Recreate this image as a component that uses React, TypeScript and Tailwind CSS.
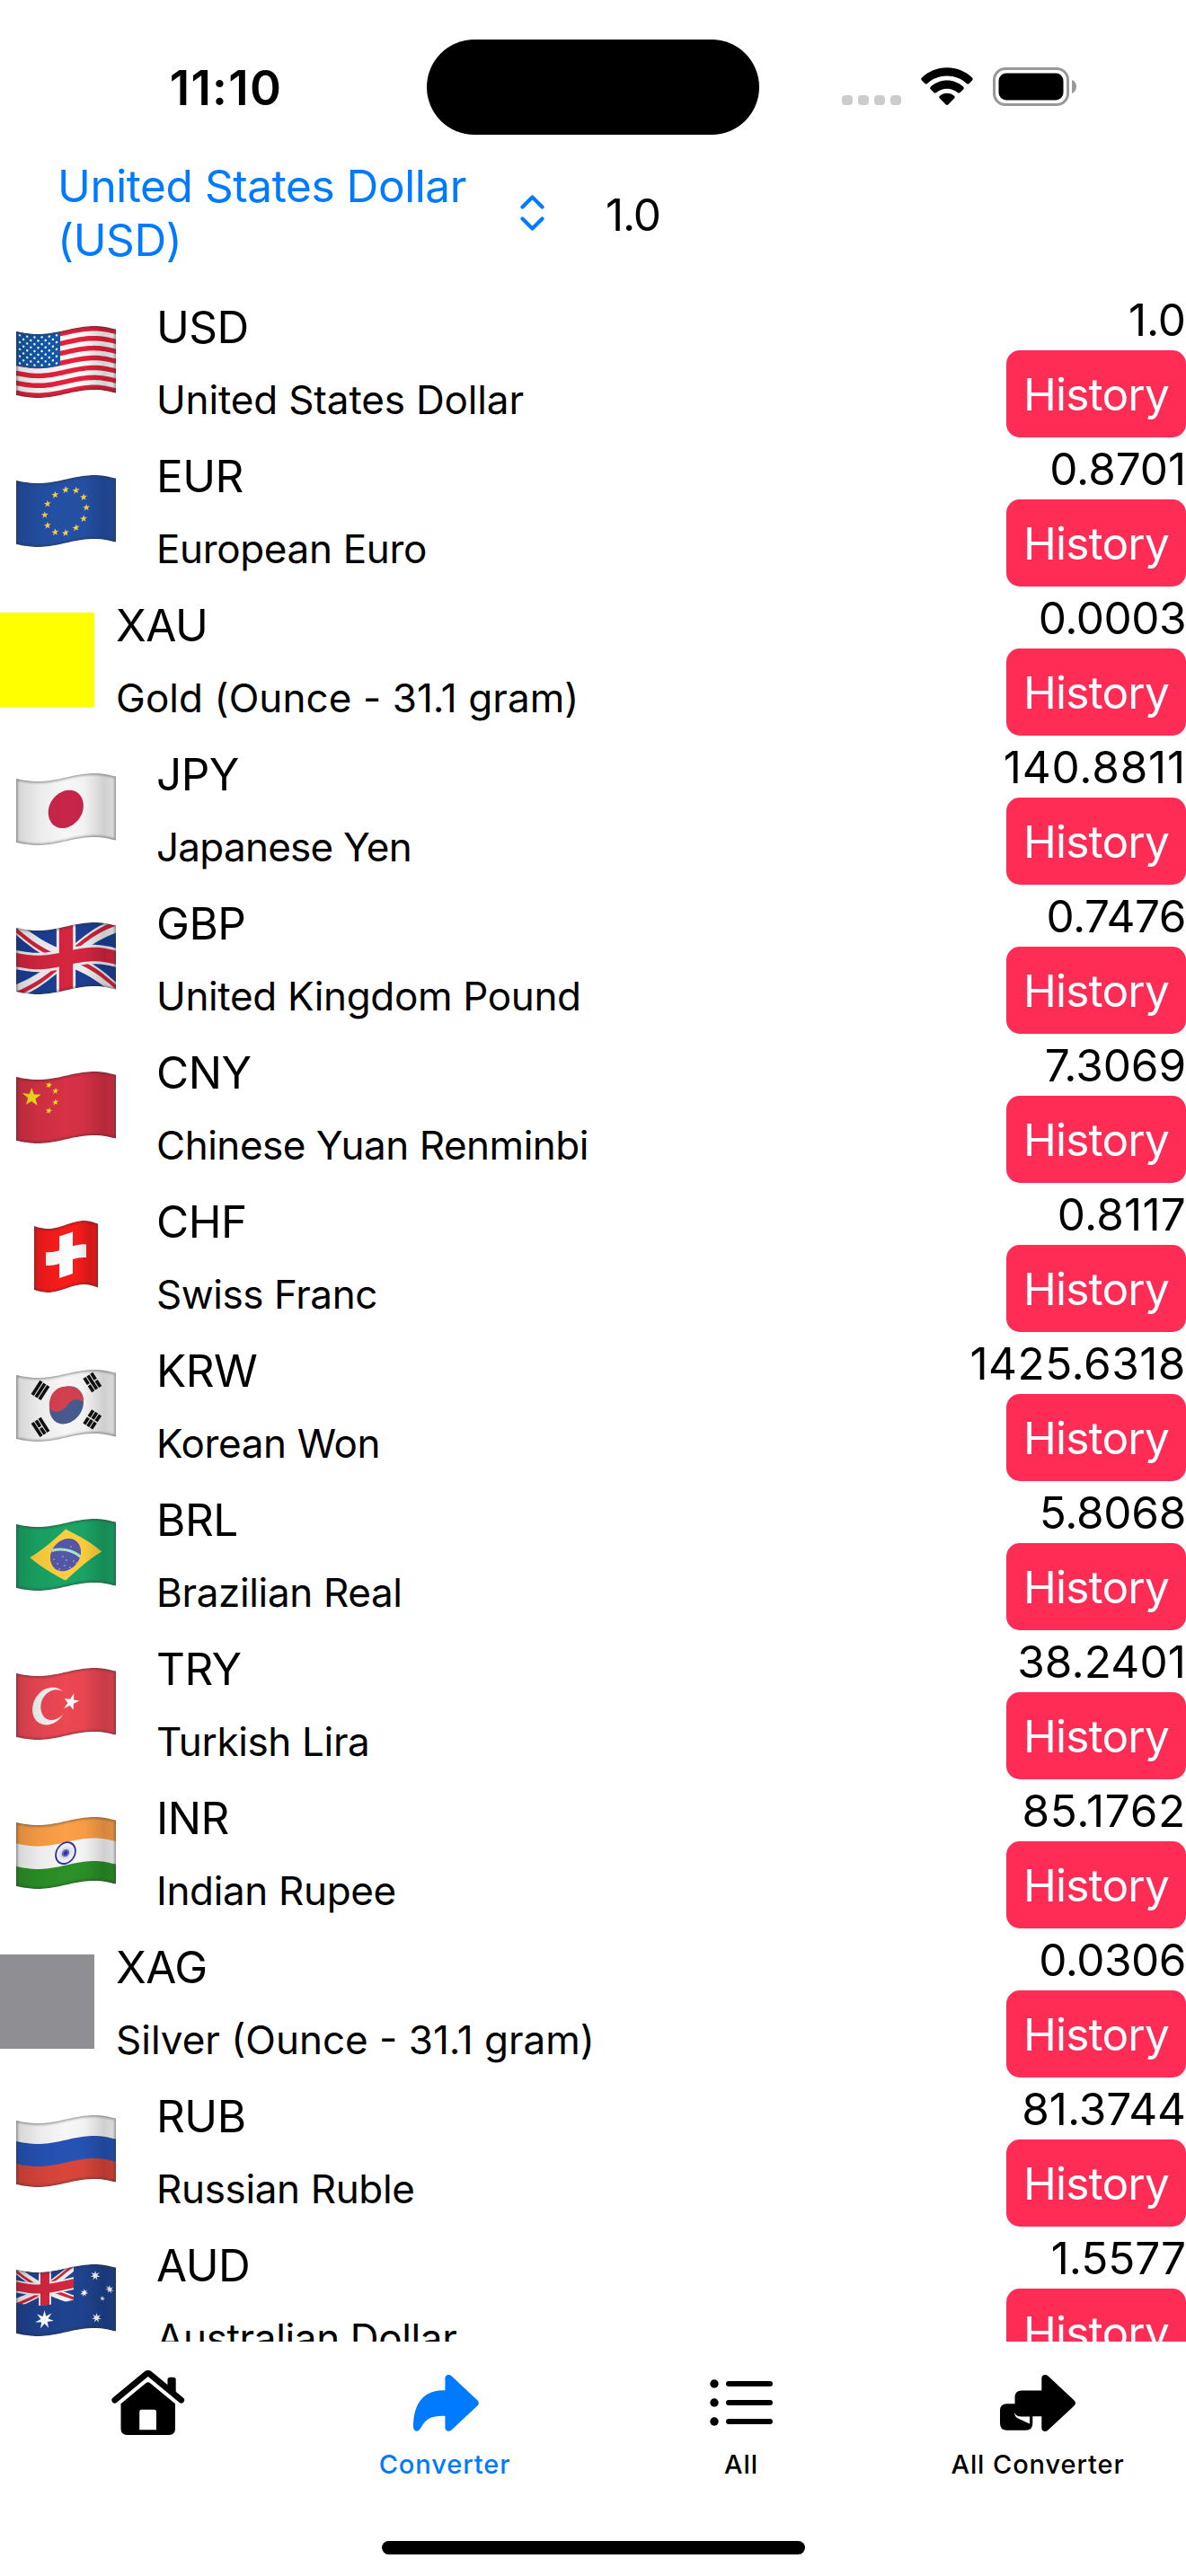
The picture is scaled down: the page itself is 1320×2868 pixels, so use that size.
import React from "react"

type Point = [number, number]

type Currency = {
  code: string
  name: string
  rate: string
  swatch?: string
  nameTracking?: string
  rateTracking?: string
}

const currencies: Currency[] = [
  { code: "USD", name: "United States Dollar", rate: "1.0", nameTracking: "tracking-[-0.15px]" },
  { code: "EUR", name: "European Euro", rate: "0.8701" },
  {
    code: "XAU",
    name: "Gold (Ounce - 31.1 gram)",
    rate: "0.0003",
    swatch: "bg-[#ffff00]",
    nameTracking: "tracking-[0.07px]",
    rateTracking: "tracking-[-0.5px]",
  },
  { code: "JPY", name: "Japanese Yen", rate: "140.8811", nameTracking: "tracking-[-0.75px]", rateTracking: "tracking-[0.8px]" },
  { code: "GBP", name: "United Kingdom Pound", rate: "0.7476", rateTracking: "tracking-[-0.5px]" },
  { code: "CNY", name: "Chinese Yuan Renminbi", rate: "7.3069", nameTracking: "tracking-[-0.48px]" },
  { code: "CHF", name: "Swiss Franc", rate: "0.8117", nameTracking: "tracking-[-0.45px]", rateTracking: "tracking-[0.2px]" },
  { code: "KRW", name: "Korean Won", rate: "1425.6318", rateTracking: "tracking-[0.5px]" },
  { code: "BRL", name: "Brazilian Real", rate: "5.8068", rateTracking: "tracking-[-0.3px]" },
  { code: "TRY", name: "Turkish Lira", rate: "38.2401", rateTracking: "tracking-[0.1px]" },
  { code: "INR", name: "Indian Rupee", rate: "85.1762", rateTracking: "tracking-[0.7px]" },
  {
    code: "XAG",
    name: "Silver (Ounce - 31.1 gram)",
    rate: "0.0306",
    swatch: "bg-[#8e8e93]",
    nameTracking: "tracking-[0px]",
    rateTracking: "tracking-[-0.5px]",
  },
  { code: "RUB", name: "Russian Ruble", rate: "81.3744" },
  { code: "AUD", name: "Australian Dollar", rate: "1.5577" },
]

const FLAG_W = 111
const FLAG_H = 71

const ease = (t: number) => (1 - Math.cos(Math.PI * t)) / 2

// vertical offset of the cloth at x
const wave = (x: number, width: number) => {
  const u = (x / width) * FLAG_W
  if (u < 24) return 6 + 3 * Math.sin((Math.PI / 2) * (u / 24))
  if (u < 87) return 9 - 9 * ease((u - 24) / 63)
  return 3.6 * (1 - Math.cos((Math.PI / 2) * ((u - 87) / 24)))
}

// splits every edge so that straight shapes bend with the cloth
const warp = (points: Point[], width = FLAG_W) => {
  const out: string[] = []
  points.forEach(([x0, y0], i) => {
    const [x1, y1] = points[(i + 1) % points.length]
    const steps = Math.max(1, Math.ceil(Math.abs(x1 - x0) / 3))
    for (let s = 0; s < steps; s++) {
      const x = x0 + ((x1 - x0) * s) / steps
      const y = y0 + ((y1 - y0) * s) / steps
      out.push(`${x.toFixed(2)},${(y + wave(x, width)).toFixed(2)}`)
    }
  })
  return out.join(" ")
}

const rect = (x: number, y: number, w: number, h: number): Point[] => [
  [x, y],
  [x + w, y],
  [x + w, y + h],
  [x, y + h],
]

const circle = (cx: number, cy: number, rx: number, ry = rx): Point[] =>
  Array.from({ length: 48 }, (_, i) => {
    const a = (i / 48) * Math.PI * 2
    return [cx + rx * Math.cos(a), cy + ry * Math.sin(a)]
  })

const star = (cx: number, cy: number, r: number, tips = 5, inner = 0.4, turn = 0): Point[] =>
  Array.from({ length: tips * 2 }, (_, i) => {
    const a = (i / (tips * 2)) * Math.PI * 2 - Math.PI / 2 + turn
    const k = i % 2 ? r * inner : r
    return [cx + k * Math.cos(a), cy + k * Math.sin(a)]
  })

const Shape = ({ points, fill, width }: { points: Point[]; fill: string; width?: number }) => (
  <polygon points={warp(points, width)} fill={fill} />
)

const UnionJack = ({ w, h, blue, cross }: { w: number; h: number; blue: string; cross: number }) => {
  const cx = w / 2
  const cy = h / 2
  const d = cross * 0.52
  const t = cross * 0.34
  const rim = cross * 0.19
  return (
    <g>
      <Shape points={rect(0, 0, w, h)} fill={blue} />
      <Shape points={[[0, -d], [w, h - d], [w, h + d], [0, d]]} fill="#f0f0f2" />
      <Shape points={[[0, h - d], [w, -d], [w, d], [0, h + d]]} fill="#f0f0f2" />
      <Shape points={[[0, 0], [cx, cy], [cx, cy + t], [0, t]]} fill="#d2233c" />
      <Shape points={[[0, h], [cx, cy], [cx, cy + t], [0, h + t]]} fill="#d2233c" />
      <Shape points={[[w, 0], [cx, cy], [cx, cy - t], [w, -t]]} fill="#d2233c" />
      <Shape points={[[w, h], [cx, cy], [cx, cy - t], [w, h - t]]} fill="#d2233c" />
      <Shape points={rect(cx - cross / 2 - rim, 0, cross + rim * 2, h)} fill="#f0f0f2" />
      <Shape points={rect(0, cy - cross / 2 - rim, w, cross + rim * 2)} fill="#f0f0f2" />
      <Shape points={rect(cx - cross / 2, 0, cross, h)} fill="#d4263f" />
      <Shape points={rect(0, cy - cross / 2, w, cross)} fill="#d4263f" />
    </g>
  )
}

const Trigram = ({ x, y, angle, broken }: { x: number; y: number; angle: number; broken: boolean[] }) => (
  <g transform={`translate(${x} ${y}) rotate(${angle})`} fill="#111">
    {broken.map((split, i) => {
      const top = -6.6 + i * 4.7
      return split ? (
        <React.Fragment key={i}>
          <rect x={-9} y={top} width={8.3} height={3.7} />
          <rect x={0.8} y={top} width={8.3} height={3.7} />
        </React.Fragment>
      ) : (
        <rect key={i} x={-9} y={top} width={18} height={3.7} />
      )
    })}
  </g>
)

const flagArt: Record<string, React.ReactNode> = {
  USD: (
    <g>
      <Shape points={rect(0, 0, 111, 71)} fill="#fafafa" />
      {[0, 2, 4, 6, 8, 10, 12].map((i) => (
        <Shape key={i} points={rect(0, (i * 71) / 13, 111, 71 / 13)} fill="#e4213b" />
      ))}
      <Shape points={rect(0, 0, 49, 38)} fill="#1259a8" />
      {Array.from({ length: 9 }, (_, row) =>
        Array.from({ length: row % 2 ? 5 : 6 }, (_, col) => (
          <Shape
            key={`${row}-${col}`}
            points={circle(4 + (row % 2 ? 4.1 : 0) + col * 8.2, 3.5 + row * 3.9, 1.25)}
            fill="#fff"
          />
        ))
      )}
    </g>
  ),
  EUR: (
    <g>
      <Shape points={rect(0, 0, 111, 71)} fill="#2450a5" />
      {Array.from({ length: 12 }, (_, i) => {
        const a = (i / 12) * Math.PI * 2
        return (
          <Shape
            key={i}
            points={star(55 + 23.2 * Math.sin(a), 35.7 - 24 * Math.cos(a), 4.2)}
            fill="#fbd043"
          />
        )
      })}
    </g>
  ),
  JPY: (
    <g>
      <Shape points={rect(0, 0, 111, 71)} fill="#f7f7f7" />
      <Shape points={circle(55.3, 35.3, 19.6, 20.8)} fill="#c8254a" />
    </g>
  ),
  GBP: <UnionJack w={111} h={71} blue="#1c3f94" cross={15.4} />,
  CNY: (
    <g>
      <Shape points={rect(0, 0, 111, 71)} fill="#d63145" />
      <Shape points={star(17.3, 20, 10.8)} fill="#f6e01c" />
      <Shape points={star(36.3, 7, 3.8, 5, 0.4, 0.3)} fill="#f6e01c" />
      <Shape points={star(43.7, 14.8, 3.8, 5, 0.4, 0.15)} fill="#f6e01c" />
      <Shape points={star(43.7, 27.2, 3.8)} fill="#f6e01c" />
      <Shape points={star(36.3, 35.5, 3.8, 5, 0.4, 0.3)} fill="#f6e01c" />
    </g>
  ),
  CHF: (
    <g>
      <Shape width={71} points={rect(0, 0, 71, 71)} fill="#fa1c1c" />
      <Shape width={71} points={rect(13, 26.3, 45, 14.7)} fill="#fff" />
      <Shape width={71} points={rect(28, 10.5, 15, 46.5)} fill="#fff" />
    </g>
  ),
  KRW: (
    <g>
      <Shape points={rect(0, 0, 111, 71)} fill="#f6f6f6" />
      <Shape points={circle(56, 35, 19, 20.6)} fill="#475a8d" />
      <path d="M37.4 44 C35 30 43 18.4 56 18.4 C69 17.6 76 27 75 37 C71 31.5 61.5 32 57 39.5 C52 47 42 49 37.4 44Z" fill="#d24050" />
      <Trigram x={27} y={23} angle={-57} broken={[false, false, false]} />
      <Trigram x={84.7} y={14} angle={57} broken={[true, false, true]} />
      <Trigram x={27} y={64} angle={57} broken={[false, true, false]} />
      <Trigram x={84.7} y={55.5} angle={-57} broken={[true, true, true]} />
    </g>
  ),
  BRL: (
    <g>
      <Shape points={rect(0, 0, 111, 71)} fill="#1ba566" />
      <Shape points={[[15.3, 34.5], [55, 7], [95.3, 36], [55, 64]]} fill="#fecf3e" />
      <Shape points={circle(55, 35.5, 17, 17.8)} fill="#5457a6" />
      <path d="M39.5 35.5 C50 32.5 62 34.5 71.5 42" fill="none" stroke="#a5e6c8" strokeWidth={3.2} />
      {[[42, 45], [46, 50], [52, 42], [56, 46], [54, 52], [60, 54], [64, 47], [48, 56], [61, 31], [67, 49]].map(([x, y]) => (
        <circle key={`${x}-${y}`} cx={x} cy={y} r={0.7} fill="#dcdcf5" />
      ))}
    </g>
  ),
  TRY: (
    <g>
      <Shape points={rect(0, 0, 111, 71)} fill="#ec4753" />
      <path d="M52.5 26.5 C46 19.5 33 20.5 26 28 C15 39 16 56 26 61.5 C35 66.5 47 61 52 52 C45 59 36 60 31 54.5 C25 47 26.5 35 34 28.5 C40 23.5 47 23 52.5 26.5Z" fill="#f3f3f3" />
      <Shape points={star(61, 34.8, 9.6, 5, 0.38, 0.35)} fill="#fbfbfb" />
    </g>
  ),
  INR: (
    <g>
      <Shape points={rect(0, 0, 111, 24)} fill="#fd9f48" />
      <Shape points={rect(0, 23.5, 111, 26)} fill="#f7f7f7" />
      <Shape points={rect(0, 49, 111, 22)} fill="#2b9127" />
      <Shape points={circle(55, 35.5, 11.8, 12.6)} fill="#2e2f9e" />
      <Shape points={circle(55, 35.5, 10, 10.8)} fill="#f1f1f8" />
      <Shape points={star(55, 35.5, 9, 24, 0.3)} fill="#a3a4d6" />
      <Shape points={circle(55, 35.5, 4)} fill="#5c5db8" />
      <Shape points={circle(55, 35.5, 2)} fill="#2e2f9e" />
    </g>
  ),
  RUB: (
    <g>
      <Shape points={rect(0, 0, 111, 24)} fill="#f7f7f7" />
      <Shape points={rect(0, 23, 111, 26)} fill="#2553b5" />
      <Shape points={rect(0, 48, 111, 23)} fill="#d9453b" />
    </g>
  ),
  AUD: (
    <g>
      <Shape points={rect(0, 0, 111, 71)} fill="#1f438f" />
      <UnionJack w={64} h={37} blue="#1f438f" cross={10} />
      <Shape points={rect(0, 37, 64, 12)} fill="#1f438f" />
      <Shape points={star(31.5, 53, 10.5, 7)} fill="#fff" />
      <Shape points={star(88, 12.5, 5.6, 7)} fill="#fff" />
      <Shape points={star(75.7, 31, 4.6, 7)} fill="#fff" />
      <Shape points={star(104, 25.7, 4.8, 7)} fill="#fff" />
      <Shape points={star(96, 37.5, 3)} fill="#fff" />
      <Shape points={star(89.5, 59.5, 5.6, 7)} fill="#fff" />
    </g>
  ),
}

const Flag = ({ code }: { code: string }) => {
  const width = code === "CHF" ? 71 : FLAG_W
  const outline = warp(rect(0, 0, width, FLAG_H), width)
  return (
    <svg width={width} height={80} viewBox={`0 0 ${width} 80`}>
      <defs>
        <clipPath id={`clip-${code}`}>
          <polygon points={outline} />
        </clipPath>
        <linearGradient id={`shade-${code}`}>
          <stop offset="0" stopColor="#000" stopOpacity={0.14} />
          <stop offset="0.22" stopColor="#000" stopOpacity={0.05} />
          <stop offset="0.5" stopColor="#000" stopOpacity={0} />
          <stop offset="0.68" stopColor="#000" stopOpacity={0.02} />
          <stop offset="0.88" stopColor="#000" stopOpacity={0.16} />
          <stop offset="1" stopColor="#000" stopOpacity={0.1} />
        </linearGradient>
        <filter id={`soft-${code}`} x="-10%" y="-10%" width="120%" height="120%">
          <feGaussianBlur stdDeviation="1.3" />
        </filter>
      </defs>
      <g clipPath={`url(#clip-${code})`}>
        {flagArt[code]}
        <rect width={width} height={80} fill={`url(#shade-${code})`} />
        <polygon
          points={outline}
          fill="none"
          stroke="#333"
          strokeOpacity={0.42}
          strokeWidth={3.4}
          filter={`url(#soft-${code})`}
        />
      </g>
    </svg>
  )
}

const StatusBar = () => (
  <div className="flex h-[177px] shrink-0 items-start">
    <div className="flex w-[475px] justify-center pt-[67px] pl-[28px]">
      <p className="text-[53px] leading-[62px] font-semibold tracking-[1.3px]">11:10</p>
    </div>
    <div className="mt-[44px] h-[106px] w-[370px] rounded-full bg-black" />
    <div className="mt-[75px] ml-[92px] flex h-[43px] items-start">
      <div className="mt-[31px] flex gap-[6.6px]">
        {[0, 1, 2, 3].map((i) => (
          <div key={i} className="h-[11px] w-[11.5px] rounded-[4px] bg-[#cccccc]" />
        ))}
      </div>
      <svg className="ml-[22px]" width="58" height="43" viewBox="0 0 58 43">
        <path d="M29 0.3 C40 0.3 50 4.6 57 11.6 C57.9 12.5 57.9 13.6 57.1 14.4 L53.6 17.9 C52.8 18.7 51.8 18.7 50.9 17.9 C44.9 12.5 37.3 9.5 29 9.5 C20.7 9.5 13.1 12.5 7.1 17.9 C6.2 18.7 5.2 18.7 4.4 17.9 L0.9 14.4 C0.1 13.6 0.1 12.5 1 11.6 C8 4.6 18 0.3 29 0.3Z" />
        <path d="M29 14.6 C36 14.6 42.3 17.3 47.1 21.6 C48 22.5 48 23.6 47.2 24.4 L43.5 28 C42.7 28.8 41.7 28.8 40.8 28 C37.6 25.3 33.5 23.7 29 23.7 C24.5 23.7 20.4 25.3 17.2 28 C16.3 28.8 15.3 28.8 14.5 28 L10.8 24.4 C10 23.6 10 22.5 10.9 21.6 C15.7 17.3 22 14.6 29 14.6Z" />
        <path d="M29 28.8 C32 28.8 34.9 29.9 37 31.8 C38 32.7 38 33.7 37.1 34.6 L30.5 41.2 C29.5 42.2 28.5 42.2 27.5 41.2 L20.9 34.6 C20 33.7 20 32.7 21 31.8 C23.1 29.9 26 28.8 29 28.8Z" />
      </svg>
      <svg className="ml-[22px]" width="94" height="43" viewBox="0 0 94 43">
        <rect x="1.5" y="1.5" width="82" height="40" rx="12.5" fill="none" stroke="#999" strokeWidth="3" />
        <rect x="6.5" y="6.5" width="72" height="30" rx="8.5" />
        <path d="M88 14 C91.5 15.4 93 18 93 21.5 C93 25 91.5 27.6 88 29Z" fill="#999" />
      </svg>
    </div>
  </div>
)

const AmountBar = () => (
  <div className="flex h-[144px] shrink-0 items-start">
    <div className="flex w-[674px] items-center pl-[64px]">
      <p className="w-[515px] text-[49.5px] leading-[60px] tracking-[-0.42px] text-[#007aff]">
        United States Dollar
        <br />
        (USD)
      </p>
      <svg width="27" height="40" viewBox="0 0 27 40" fill="none" stroke="#007aff" strokeWidth="4.2" strokeLinecap="round" strokeLinejoin="round">
        <path d="M2.5 13.5 L13.5 2.5 L24.5 13.5 M2.5 26.5 L13.5 37.5 L24.5 26.5" />
      </svg>
    </div>
    <p className="pt-[32px] text-[49.5px] leading-[60px] tracking-[-1.2px]">1.0</p>
  </div>
)

const CurrencyRow = ({ currency }: { currency: Currency }) => (
  <div className="flex h-[166px] shrink-0 items-start">
    {currency.swatch ? (
      <div className={`mt-[29px] mr-[24px] size-[105px] shrink-0 ${currency.swatch}`} />
    ) : (
      <div className="mt-[42px] mr-[28px] flex w-[146px] shrink-0 justify-center">
        <Flag code={currency.code} />
      </div>
    )}
    <div className="flex flex-1 flex-col gap-[24px] pt-[13px]">
      <p className="text-[49.5px] leading-[60px] tracking-[-0.5px]">{currency.code}</p>
      <p className={`text-[44px] leading-[54px] ${currency.nameTracking ?? "tracking-[-0.35px]"}`}>
        {currency.name}
      </p>
    </div>
    <div className="flex flex-col items-end gap-[4px] pt-[5px]">
      <p className={`text-[49.5px] leading-[60px] ${currency.rateTracking ?? "tracking-[-0.1px]"}`}>
        {currency.rate}
      </p>
      <button className="flex h-[97px] w-[200px] items-center justify-center rounded-[15px] bg-[#ff2d55] text-[49.5px] leading-[60px] tracking-[-0.8px] text-white">
        History
      </button>
    </div>
  </div>
)

const HomeIcon = () => (
  <svg width="82" height="73" viewBox="0 0 82 73">
    <path d="M3.8 33.2 L38.5 4.3 C40 3.1 41.5 3.1 43 4.3 L77.7 33.2" fill="none" stroke="#000" strokeWidth="6.8" strokeLinecap="round" strokeLinejoin="round" />
    <path d="M62.5 22 V10.5 Q62.5 7.8 65.2 7.8 H69 Q71.7 7.8 71.7 10.5 V29Z" />
    <path fillRule="evenodd" d="M10.5 37.2 L38.6 14 Q40.7 12.3 42.8 14 L71 37.2 V65 Q71 72 64 72 H17.5 Q10.5 72 10.5 65Z M33.5 43.8 Q31.2 43.8 31.2 46 V66.3 H50 V46 Q50 43.8 47.7 43.8Z" />
  </svg>
)

const ConverterIcon = () => (
  <svg className="ml-[3px]" width="73" height="63" viewBox="0 0 73 63" fill="currentColor">
    <path d="M35.4 17.3 V4 C35.4 1.5 37 0 39.3 0 C40.7 0 41.8 0.5 43 1.7 L71 28 C72.2 29.2 72.8 30.2 72.8 31.4 C72.8 32.5 72.2 33.6 71 34.8 L43 61 C41.9 62.1 40.8 62.7 39.4 62.7 C37 62.7 35.4 61.2 35.4 59 V45.7 H33 C20 45.7 14 49 8.7 58.5 C7.2 61.3 5.5 62.7 3.8 62.7 C1.6 62.7 0 61 0 57.6 C0 37 8 17.3 33 17.3Z" />
  </svg>
)

const ListIcon = () => (
  <svg width="70" height="52" viewBox="0 0 70 52">
    {[5, 26, 47].map((y) => (
      <React.Fragment key={y}>
        <circle cx="5" cy={y} r="4.7" />
        <rect x="18" y={y - 3} width="52" height="6" rx="3" />
      </React.Fragment>
    ))}
  </svg>
)

const AllConverterIcon = () => (
  <svg width="84" height="63" viewBox="0 0 84 63">
    <path d="M46.3 17.5 V4 C46.3 1.5 48 0 50.2 0 C51.6 0 52.8 0.6 54 1.8 L82 28 C83.2 29.2 84 30.3 84 31.5 C84 32.6 83.2 33.7 82 34.9 L54 61 C52.8 62.2 51.7 63 50.2 63 C48 63 46.3 61.4 46.3 59 V46.3 H36.3 V54 Q36.3 61.8 28.5 61.8 H7.5 Q0 61.8 0 54 V40 Q0 32.3 7.5 32.3 H16.5 V25 Q16.5 17.5 24 17.5Z" />
    <path d="M16.3 41.8 C16.8 44.8 19.5 46.5 23.7 46.5 H33 V54.5 L21.5 49.3 C17.5 47.5 16 45.5 16.3 41.8Z" fill="#fff" />
  </svg>
)

const tabs = [
  { label: "", icon: <HomeIcon /> },
  { label: "Converter", icon: <ConverterIcon />, active: true },
  { label: "All", icon: <ListIcon /> },
  { label: "All Converter", icon: <AllConverterIcon /> },
]

const TabBar = () => (
  <div className="grid h-[222px] shrink-0 grid-cols-4 pt-[28px]">
    {tabs.map((tab) => (
      <div
        key={tab.label}
        className={`flex flex-col items-center ${tab.active ? "text-[#007aff]" : "text-black"}`}
      >
        <div className="flex h-[80px] items-center justify-center">{tab.icon}</div>
        <p className="mt-[11px] text-[29px] leading-[36px] font-medium tracking-[0.9px]">{tab.label}</p>
      </div>
    ))}
  </div>
)

const App = () => (
  <div className="flex h-[2868px] w-[1320px] flex-col overflow-hidden bg-white font-['Inter',sans-serif] text-black">
    <StatusBar />
    <AmountBar />
    <div className="flex h-[2286px] shrink-0 flex-col overflow-hidden">
      {currencies.map((currency) => (
        <CurrencyRow key={currency.code} currency={currency} />
      ))}
    </div>
    <TabBar />
    <div className="mx-auto h-[15px] w-[471px] rounded-full bg-black" />
  </div>
)

export default App
